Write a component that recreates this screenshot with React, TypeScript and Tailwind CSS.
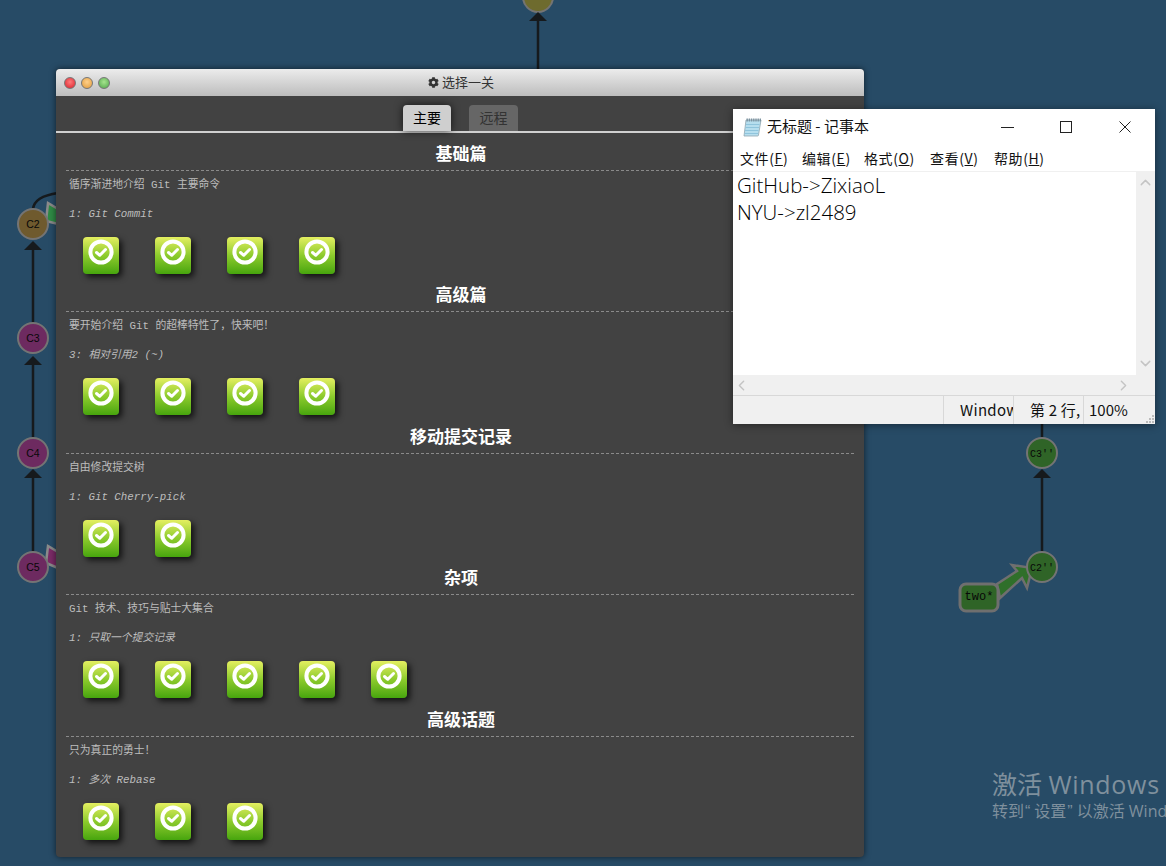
import { ChevronDown, ChevronLeft, ChevronRight, ChevronUp } from 'lucide-react';
import { FaCog } from 'react-icons/fa';

const sections = [
    { title: '基础篇', desc: '循序渐进地介绍 Git 主要命令', sub: '1: Git Commit', count: 4 },
    { title: '高级篇', desc: '要开始介绍 Git 的超棒特性了，快来吧！', sub: '3: 相对引用2 (~)', count: 4 },
    { title: '移动提交记录', desc: '自由修改提交树', sub: '1: Git Cherry-pick', count: 2 },
    { title: '杂项', desc: 'Git 技术、技巧与贴士大集合', sub: '1: 只取一个提交记录', count: 5 },
    { title: '高级话题', desc: '只为真正的勇士！', sub: '1: 多次 Rebase', count: 3 },
];

const menus = [
    { label: '文件(', key: 'F', w: 'w-[62px]' },
    { label: '编辑(', key: 'E', w: 'w-[62px]' },
    { label: '格式(', key: 'O', w: 'w-[66px]' },
    { label: '查看(', key: 'V', w: 'w-[64px]' },
    { label: '帮助(', key: 'H', w: 'w-[64px]' },
];

const Node = ({ x, y, fill, label, mono }: { x: number; y: number; fill: string; label: string; mono?: boolean }) => (
    <g>
        <circle cx={x} cy={y} r={15} fill={fill} stroke="#747474" strokeWidth={2} />
        <text
            x={x}
            y={y + 3.5}
            textAnchor="middle"
            fontSize={mono ? 10 : 10.5}
            fill="#080808"
            fontFamily={mono ? '"Liberation Mono", monospace' : '"Liberation Sans", sans-serif'}
        >
            {label}
        </text>
    </g>
);

const Edge = ({ x, from, to }: { x: number; from: number; to: number }) => (
    <g>
        <line x1={x} y1={from} x2={x} y2={to} stroke="#161a1d" strokeWidth={2.5} />
        <polygon points={`${x},${to - 9} ${x + 9},${to} ${x - 9},${to}`} fill="#161a1d" />
    </g>
);

const Graph = () => (
    <svg className="absolute inset-0" width={1166} height={866} viewBox="0 0 1166 866">
        <circle cx={538} cy={-3} r={15} fill="#6e6b2e" stroke="#747474" strokeWidth={2} />
        <Edge x={538} from={70} to={21} />
        <Edge x={33} from={323} to={250} />
        <Edge x={33} from={437} to={365} />
        <Edge x={33} from={551} to={478} />
        <path d="M33 209 C34 200 44 195 58 193" fill="none" stroke="#161a1d" strokeWidth={2.5} />
        <polygon points="46,221 48,203 58,209 58,224" fill="#2f8a45" stroke="#8a8a8a" strokeWidth={2.5} />
        <polygon points="46,563 48,546 58,552 58,568" fill="#7a2a66" stroke="#8a8a8a" strokeWidth={2.5} />
        <Node x={33} y={224} fill="#6f5a2e" label="C2" />
        <Node x={33} y={338} fill="#6d2a60" label="C3" />
        <Node x={33} y={453} fill="#6d2a60" label="C4" />
        <Node x={33} y={567} fill="#6d2a60" label="C5" />

        <line x1={1042} y1={420} x2={1042} y2={437} stroke="#161a1d" strokeWidth={2.5} />
        <Edge x={1042} from={551} to={478} />
        <Node x={1042} y={453} fill="#2f6427" label="C3''" mono />
        <polygon
            points="997,584 1017,571 1012,565 1032,568 1027,588 1022,578 1000,598"
            fill="#2f6f2a"
            stroke="#6f6f6f"
            strokeWidth={2.5}
        />
        <Node x={1042} y={567} fill="#2f6427" label="C2''" mono />
        <rect x={960} y={584} width={38} height={27} rx={6} fill="#2f6427" stroke="#6f6f6f" strokeWidth={3} />
        <text x={979} y={600} textAnchor="middle" fontSize={12} fill="#080808" fontFamily='"Liberation Mono", monospace'>
            two*
        </text>
    </svg>
);

const LevelIcon = () => (
    <div className="w-9 h-[37px] rounded-[4px] bg-gradient-to-b from-[#e4ef60] via-[#8ccb2c] to-[#46a50d] shadow-[3px_3px_6px_rgba(0,0,0,0.75)] flex justify-center pt-[2px]">
        <svg width={26} height={26} viewBox="0 0 26 26">
            <circle cx={13} cy={13} r={10.6} fill="none" stroke="#fff" strokeWidth={4} />
            <path d="M8.5 13.5 L11.8 16.3 L17.5 10.5" fill="none" stroke="#fff" strokeWidth={3} strokeLinecap="round" strokeLinejoin="round" />
        </svg>
    </div>
);

const LevelWindow = () => (
    <div className="absolute left-[56px] top-[69px] w-[808px] h-[788px] rounded-[4px] bg-[#424242] shadow-[0_0_6px_rgba(0,0,0,0.6)] overflow-hidden">
        {/* title bar */}
        <div className="relative h-[27px] flex items-center justify-center gap-[3px] pl-[2px] bg-gradient-to-b from-[#ececec] to-[#bdbdbd] text-[#333] text-[13px]">
            <div className="absolute left-[8px] top-[8px] flex gap-[5px]">
                <span className="w-3 h-3 rounded-full border border-[#777] bg-[radial-gradient(circle_at_50%_40%,#ff7a7a,#d8202a)]" />
                <span className="w-3 h-3 rounded-full border border-[#777] bg-[radial-gradient(circle_at_50%_40%,#ffd08a,#e09a3a)]" />
                <span className="w-3 h-3 rounded-full border border-[#777] bg-[radial-gradient(circle_at_50%_40%,#a6e48e,#4fa54a)]" />
            </div>
            <FaCog size={11} />
            <span>选择一关</span>
        </div>

        {/* tabs */}
        <div className="h-[37px] border-b-2 border-[#d0d0d0] flex justify-center items-end gap-[18px] pl-[1px] text-sm">
            <div className="w-12 h-[26px] rounded-t-[4px] bg-[#cfcfcf] text-black flex items-center justify-center shadow-[0_0_8px_rgba(0,0,0,0.7)]">主要</div>
            <div className="w-[49px] h-[26px] rounded-t-[4px] bg-[#666] text-[#333] flex items-center justify-center">远程</div>
        </div>

        {/* levels */}
        <div className="px-[10px] pt-[4px]">
            {sections.map((s) => (
                <section key={s.title} className="h-[141.5px]">
                    <h2 className="h-[33.7px] pt-[2px] pl-[2px] border-b border-dashed border-[#8a8a8a] flex items-center justify-center text-[17px] font-bold text-white">{s.title}</h2>
                    <p className="mt-[8.3px] pl-[3px] text-[10.8px] leading-[13px] text-[#bdbdbd] font-['Liberation_Mono','Noto_Sans_CJK_SC',monospace] whitespace-pre">{s.desc}</p>
                    <p className="mt-[16px] pl-[3px] text-[10.8px] leading-[13px] italic text-[#bdbdbd] font-['Liberation_Mono','Noto_Sans_CJK_SC',monospace] whitespace-pre">{s.sub}</p>
                    <div className="mt-[16px] pl-[17px] flex gap-9">
                        {Array.from({ length: s.count }).map((_, i) => (
                            <LevelIcon key={i} />
                        ))}
                    </div>
                </section>
            ))}
        </div>
    </div>
);

const NotepadIcon = () => (
    <svg width={20} height={20} viewBox="0 0 20 20">
        <path d="M4 3 H19 L16.5 18 a1 1 0 0 1 -1 1 H2 Z" fill="#b6deee" stroke="#8fa5ae" strokeWidth={0.8} />
        <path d="M4 7.5 H17.5 M3.5 10.5 H17 M3 13.5 H16.5 M2.6 16.5 H16" stroke="#8fc4dc" strokeWidth={1} />
        <path d="M4.5 3 H19" stroke="#7c93a0" strokeWidth={3} strokeDasharray="1.4 0.8" />
    </svg>
);

const Notepad = () => (
    <div className="absolute left-[733px] top-[109px] w-[422px] h-[315px] bg-white shadow-[0_1px_8px_rgba(0,0,0,0.45)] flex flex-col text-[#111] font-['Noto_Sans_CJK_SC',sans-serif]">
        {/* title bar */}
        <div className="h-[36px] flex items-center pl-[9px] shrink-0">
            <NotepadIcon />
            <span className="ml-[5px] text-[15px] leading-[34px] h-[36px]">无标题 - 记事本</span>
            <div className="ml-auto flex items-center">
                <span className="w-[13px] h-px bg-[#222] mr-[46px]" />
                <span className="w-3 h-3 border border-[#222] mr-[47px]" />
                <svg width={12} height={12} viewBox="0 0 12 12" className="mr-[24px]">
                    <path d="M0.5 0.5 L11.5 11.5 M11.5 0.5 L0.5 11.5" stroke="#222" strokeWidth={1} />
                </svg>
            </div>
        </div>

        {/* menu */}
        <div className="h-[26px] flex items-center pl-[7px] text-sm tracking-[0.6px] shrink-0">
            {menus.map((m) => (
                <span key={m.key} className={m.w}>
                    {m.label}
                    <span className="underline">{m.key}</span>)
                </span>
            ))}
        </div>

        {/* edit area */}
        <div className="flex h-[204px] shrink-0 bg-[#f0f0f0]">
            <div className="w-[403px] bg-white border-t border-[#f0f0f0] pl-1 text-[20.5px] leading-[27px] font-light font-['Open_Sans',sans-serif] text-black">
                <div>GitHub-&gt;ZixiaoL</div>
                <div>NYU-&gt;zl2489</div>
            </div>
            <div className="flex-1 flex flex-col items-center justify-between py-[3px] text-[#c4c4c4]">
                <ChevronUp size={17} strokeWidth={2} />
                <ChevronDown size={17} strokeWidth={2} />
            </div>
        </div>

        {/* horizontal scrollbar */}
        <div className="h-[20px] shrink-0 bg-[#f0f0f0] flex items-center justify-between pr-[23px] text-[#c4c4c4]">
            <ChevronLeft size={17} strokeWidth={2} />
            <ChevronRight size={17} strokeWidth={2} />
        </div>

        {/* status bar */}
        <div className="relative flex-1 bg-[#f0f0f0] border-t border-[#d8d8d8] flex text-[15px] leading-[28px] pl-[210px]">
            <div className="w-[70px] border-l border-[#d8d8d8] pl-[16px] tracking-[0.3px] overflow-hidden whitespace-nowrap">Windows</div>
            <div className="w-[70px] border-l border-[#d8d8d8] pl-[16px] tracking-[0.2px] overflow-hidden whitespace-pre">第 2 行,</div>
            <div className="border-l border-[#d8d8d8] pl-[5px]">100%</div>
            <div className="absolute right-[1px] bottom-[1px] grid grid-cols-3 gap-px">
                <span />
                <span />
                <span className="w-[2px] h-[2px] bg-[#bbb]" />
                <span />
                <span className="w-[2px] h-[2px] bg-[#bbb]" />
                <span className="w-[2px] h-[2px] bg-[#bbb]" />
                <span className="w-[2px] h-[2px] bg-[#bbb]" />
                <span className="w-[2px] h-[2px] bg-[#bbb]" />
                <span className="w-[2px] h-[2px] bg-[#bbb]" />
            </div>
        </div>
    </div>
);

export default function App() {
    return (
        <div className="relative w-[1166px] h-[866px] overflow-hidden bg-[#274b66] font-['Liberation_Sans','Noto_Sans_CJK_SC',sans-serif]">
            <Graph />
            <LevelWindow />
            <Notepad />
            <div className="absolute left-[992px] top-[766px] whitespace-nowrap text-[#7f909d] font-['Open_Sans','Noto_Sans_CJK_SC',sans-serif]">
                <div className="text-[25px] leading-[36px]">
                    激活 <span className="tracking-[0.7px]">Windows</span>
                </div>
                <div className="text-[16px] leading-[24px] -mt-[3px]">
                    转到<span className="pl-[1px] pr-[4px] font-['Liberation_Sans']">“</span>设置<span className="pl-[1px] pr-[4px] font-['Liberation_Sans']">”</span>以激活 Windows。
                </div>
            </div>
        </div>
    );
}
